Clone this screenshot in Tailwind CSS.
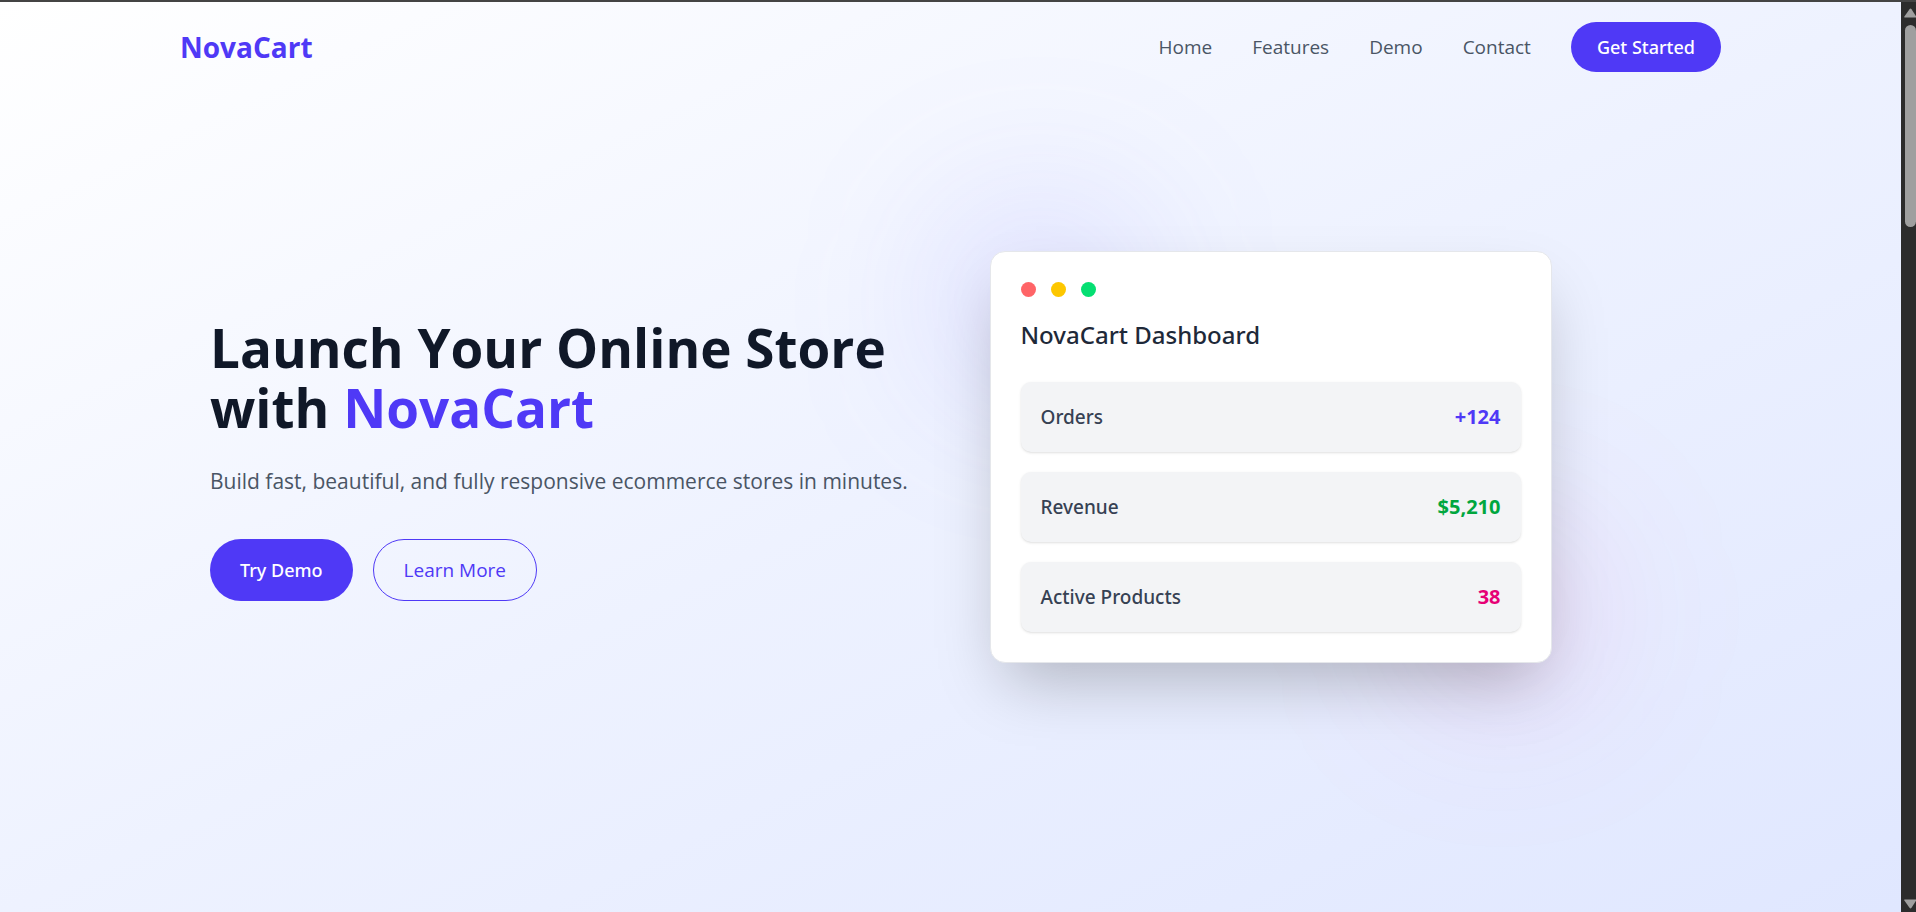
<!DOCTYPE html>
<html lang="en">
<head>
<meta charset="utf-8">
<meta name="viewport" content="width=device-width, initial-scale=1">
<title>NovaCart</title>
<script src="https://cdn.jsdelivr.net/npm/@tailwindcss/browser@4"></script>
</head>
<body class="flex h-screen flex-col overflow-hidden border-t-2 border-[#444444] font-['Open_Sans','Noto_Sans',sans-serif] text-[19px] leading-[30px]">
<div class="flex min-h-0 flex-1">
  <div class="flex min-w-0 flex-1 flex-col overflow-hidden bg-linear-to-br from-white via-indigo-50 to-indigo-100">
    <header class="mx-auto flex w-full max-w-[1601px] items-center justify-between px-[30px] py-5">
      <a href="#" class="text-[28px] font-bold text-indigo-600">NovaCart</a>
      <nav class="flex items-center gap-10 text-gray-600">
        <a href="#home">Home</a>
        <a href="#features">Features</a>
        <a href="#demo">Demo</a>
        <a href="#contact">Contact</a>
        <button type="button" class="rounded-full bg-indigo-600 px-[26px] py-[10px] font-['Noto_Sans',sans-serif] text-lg leading-[30px] font-medium text-white">Get Started</button>
      </nav>
    </header>
    <main class="mx-auto grid w-full max-w-[1601px] flex-1 grid-cols-2 items-center gap-[78px] px-[60px] pb-[90px]">
      <section class="pt-1">
        <h1 class="text-[53px] leading-[60px] font-bold text-gray-900">Launch Your Online Store<br>with <span class="text-indigo-600">NovaCart</span></h1>
        <p class="mt-[26px] text-[21px] leading-[35px] whitespace-nowrap text-gray-600">Build fast, beautiful, and fully responsive ecommerce stores in minutes.</p>
        <div class="mt-10 flex gap-5">
          <button type="button" class="rounded-full bg-indigo-600 px-[30px] py-4 font-['Noto_Sans',sans-serif] text-lg leading-[30px] font-medium text-white">Try Demo</button>
          <button type="button" class="rounded-full border border-indigo-600 px-[30px] py-[15px] text-indigo-600">Learn More</button>
        </div>
      </section>
      <section class="relative w-full max-w-[562px]">
        <div class="absolute -top-[50px] -left-[50px] size-[200px] rounded-full bg-indigo-500/15 blur-[80px]"></div>
        <div class="absolute -right-[50px] -bottom-[50px] size-[200px] rounded-full bg-pink-500/10 blur-[80px]"></div>
        <div class="relative rounded-[15px] border border-gray-200 bg-white p-[30px] shadow-[0_31px_62px_-15px_rgb(0_0_0/0.25)]">
          <div class="flex gap-[15px]">
            <span class="size-[15px] rounded-full bg-red-400"></span>
            <span class="size-[15px] rounded-full bg-yellow-400"></span>
            <span class="size-[15px] rounded-full bg-green-400"></span>
          </div>
          <h2 class="mt-5 font-['Noto_Sans',sans-serif] text-2xl leading-[35px] font-medium text-gray-800">NovaCart Dashboard</h2>
          <dl class="mt-[30px] flex flex-col gap-5">
            <div class="flex items-center justify-between rounded-[10px] bg-gray-100 p-5 shadow">
              <dt class="font-['Noto_Sans',sans-serif] font-medium text-gray-700">Orders</dt>
              <dd class="text-xl leading-[30px] font-bold text-indigo-600">+124</dd>
            </div>
            <div class="flex items-center justify-between rounded-[10px] bg-gray-100 p-5 shadow">
              <dt class="font-['Noto_Sans',sans-serif] font-medium text-gray-700">Revenue</dt>
              <dd class="text-xl leading-[30px] font-bold text-green-600">$5,210</dd>
            </div>
            <div class="flex items-center justify-between rounded-[10px] bg-gray-100 p-5 shadow">
              <dt class="font-['Noto_Sans',sans-serif] font-medium text-gray-700">Active Products</dt>
              <dd class="text-xl leading-[30px] font-bold text-pink-600">38</dd>
            </div>
          </dl>
        </div>
      </section>
    </main>
  </div>
  <div class="flex w-[15px] shrink-0 flex-col items-end bg-[#2c2c2c] pt-[6px] pb-[3px]" aria-hidden="true">
    <svg class="h-[10px] w-3 shrink-0" viewBox="0 0 12 10" fill="#9f9f9f"><path d="M6.5 0.5 Q7 0.5 7.5 1.2 L12.5 9 L12.5 9.5 L0.5 9.5 Q0 9.3 0.4 8.6 L5.5 1.2 Q6 0.5 6.5 0.5Z"/></svg>
    <div class="mt-[7px] h-[202px] w-[11px] shrink-0 rounded-full bg-[#9f9f9f]"></div>
    <svg class="mt-auto h-[10px] w-3 shrink-0" viewBox="0 0 12 10" fill="#9f9f9f"><path d="M0.5 0.5 L12.5 0.5 L12.5 1 L7.5 8.8 Q6.5 10 5.5 8.8 L0.4 1.4 Q0 0.6 0.5 0.5Z"/></svg>
  </div>
</div>
</body>
</html>
